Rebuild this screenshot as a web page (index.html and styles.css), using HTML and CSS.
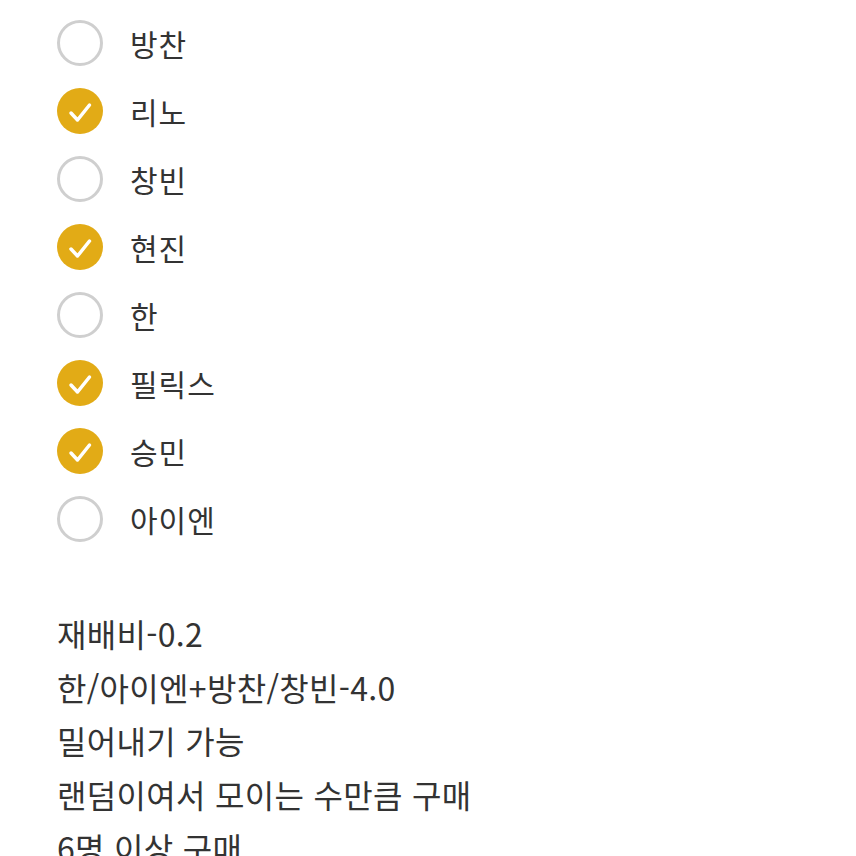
FILE: index.html
```html
<!DOCTYPE html>
<html lang="ko">
<head>
    <meta charset="UTF-8">
    <meta name="viewport" content="width=device-width, initial-scale=1.0">
    <title>멤버 선택</title>
    <link rel="stylesheet" href="styles.css">
</head>
<body>
    <ul class="options">
        <li><span class="mark"></span>방찬</li>
        <li><span class="mark checked"><svg viewBox="0 0 46 46"><path d="M14 25l6.5 7 12-15"/></svg></span>리노</li>
        <li><span class="mark"></span>창빈</li>
        <li><span class="mark checked"><svg viewBox="0 0 46 46"><path d="M14 25l6.5 7 12-15"/></svg></span>현진</li>
        <li><span class="mark"></span>한</li>
        <li><span class="mark checked"><svg viewBox="0 0 46 46"><path d="M14 25l6.5 7 12-15"/></svg></span>필릭스</li>
        <li><span class="mark checked"><svg viewBox="0 0 46 46"><path d="M14 25l6.5 7 12-15"/></svg></span>승민</li>
        <li><span class="mark"></span>아이엔</li>
    </ul>

    <div class="notes">
        <p>재배비-0.2</p>
        <p>한/아이엔+방찬/창빈-4.0</p>
        <p>밀어내기 가능</p>
        <p>랜덤이여서 모이는 수만큼 구매</p>
        <p>6명 이상 구매</p>
    </div>
</body>
</html>
```

FILE: styles.css
```css
body {
    margin: 0;
    background: #fff;
    color: #333;
    font-family: "Noto Sans CJK KR", "Noto Sans", sans-serif;
    overflow: hidden;
}

.options {
    list-style: none;
    margin: 0;
    padding: 9px 0 0 57px;
}

.options li {
    height: 68px;
    display: flex;
    align-items: center;
    gap: 27px;
    font-size: 30px;
    letter-spacing: 1px;
}

.mark {
    width: 46px;
    height: 46px;
    box-sizing: border-box;
    border: 3px solid #cfcfcf;
    border-radius: 50%;
    flex-shrink: 0;
    display: flex;
}

.mark.checked {
    border: none;
    background: #e2ab16;
}

.mark svg {
    width: 46px;
    height: 46px;
}

.mark path {
    fill: none;
    stroke: #fff;
    stroke-width: 3.5;
    stroke-linecap: round;
    stroke-linejoin: round;
}

.notes {
    margin-top: 54px;
    padding-left: 57px;
}

.notes p {
    margin: 0;
    font-size: 32px;
    line-height: 53.5px;
    letter-spacing: 0.3px;
}
```
